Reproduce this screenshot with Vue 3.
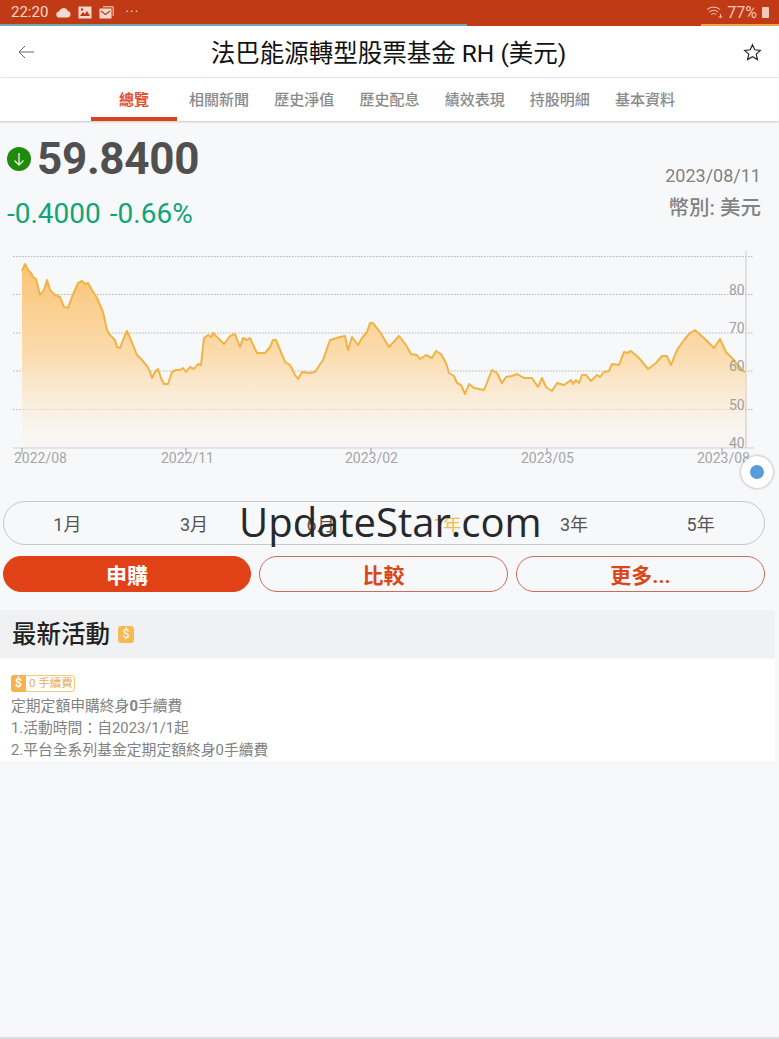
<template>
  <div class="page">
    <div class="statusbar">
      <div class="status-left">
        <span class="time">22:20</span>
        <svg class="st-ic" width="15" height="11" viewBox="0 0 15 11"><path d="M3.5 10.5a3 3 0 0 1-.4-6A4.6 4.6 0 0 1 11.8 4a3.3 3.3 0 0 1 0 6.500z" fill="#f6d9cc"/></svg>
        <svg class="st-ic" width="14" height="13" viewBox="0 0 14 13"><rect x="0.500" y="0.500" width="13" height="12" fill="#f6d9cc"/><path d="M2 10l3-4 2 2 2-3 3 5z" fill="#bf3a15"/><circle cx="4" cy="3.500" r="1.200" fill="#bf3a15"/></svg>
        <svg class="st-ic" width="15" height="13" viewBox="0 0 15 13"><path d="M4 .8h10.200v9" fill="none" stroke="#f6d9cc"/><rect x="0.500" y="2.500" width="12" height="10" fill="#f6d9cc"/><path d="M2 5l4.500 3.500L11 5" fill="none" stroke="#bf3a15" stroke-width="1.200"/></svg>
        <span class="dots">···</span>
      </div>
      <div class="status-right">
        <svg width="18" height="13" viewBox="0 0 18 13" fill="none" stroke="#f2c9b8" stroke-width="1"><path d="M1 3.500a10 10 0 0 1 13 0M3 6a7 7 0 0 1 9 0M5 8.500a4 4 0 0 1 5 0"/><path d="M14.500 8v4M12.800 10.200l1.700 1.800 1.700-1.800" /></svg>
        <span class="batt-pct">77%</span>
        <span class="batt"></span>
      </div>
      <span class="load-teal"></span>
      <span class="load-orange"></span>
    </div>

    <header class="titlebar">
      <svg class="back" width="16" height="14" viewBox="0 0 16 14" fill="none" stroke="#666" stroke-width="1"><path d="M16 7H1M7 1L1 7l6 6"/></svg>
      <h1>法巴能源轉型股票基金 RH (美元)</h1>
      <svg class="star" width="19" height="18" viewBox="0 0 20 19" fill="none" stroke="#222" stroke-width="1.200"><path d="M10 1.800l2.400 5.400 5.900.6-4.400 3.900 1.300 5.800-5.200-3-5.200 3 1.300-5.800L1.700 7.800l5.900-.6z"/></svg>
    </header>

    <nav class="tabs">
      <a v-for="(t, i) in tabs" :key="t" class="tab" :class="{ active: i === 0 }">{{ t }}</a>
    </nav>

    <section class="quote">
      <div>
        <div class="price-row">
          <svg width="24" height="24" viewBox="0 0 24 24"><circle cx="12" cy="12" r="12" fill="#1f8a0c"/><path d="M12 6v12M7.500 13.500L12 18l4.500-4.500" fill="none" stroke="#dff0d8" stroke-width="1.400"/></svg>
          <span class="price">59.8400</span>
        </div>
        <div class="change"><span>-0.4000</span><span>-0.66%</span></div>
      </div>
      <div class="meta">
        <div class="date">2023/08/11</div>
        <div class="currency">幣別: 美元</div>
      </div>
    </section>

    <div class="chart-wrap">
      <svg class="chart" width="779" height="222" viewBox="0 248 779 222">
        <defs>
          <linearGradient id="area" x1="0" y1="264" x2="0" y2="448" gradientUnits="userSpaceOnUse">
            <stop offset="0" stop-color="#fbc475" />
            <stop offset="0.5" stop-color="#fbdcae" />
            <stop offset="1" stop-color="#fbf4ea" stop-opacity="0.300" />
          </linearGradient>
        </defs>
        <line v-for="y in grid" :key="y" x1="13" x2="754" :y1="y" :y2="y" stroke="#b4b4b4" stroke-dasharray="1.500 1.500" />
        <polygon :points="areaPoints" fill="url(#area)" />
        <polyline :points="linePoints" fill="none" stroke="#f2b345" stroke-width="2" stroke-linejoin="round" />
        <line x1="13" x2="754" y1="448" y2="448" stroke="#cfcfcf" stroke-width="1.200" />
        <line x1="746" x2="746" y1="251" y2="448" stroke="#cfcfcf" stroke-width="1.200" />
        <line v-for="t in xTicks" :key="t.label" :x1="t.x" :x2="t.x" y1="448" y2="454" stroke="#999" />
        <text v-for="t in xTicks" :key="t.label + 't'" :x="t.tx" y="463" class="ax">{{ t.label }}</text>
        <text v-for="l in yLabels" :key="l.v" x="729" :y="l.y" class="ax yl">{{ l.v }}</text>
      </svg>
      <button class="fab"><span></span></button>
    </div>

    <div class="range">
      <span v-for="(r, i) in ranges" :key="r" class="range-item" :class="{ on: i === 3 }">{{ r }}</span>
    </div>

    <div class="actions">
      <button class="btn primary">申購</button>
      <button class="btn">比較</button>
      <button class="btn">更多...</button>
    </div>

    <section class="promo">
      <div class="promo-head">
        <h2>最新活動</h2>
        <span class="coin">$</span>
      </div>
      <div class="promo-body">
        <div class="badge"><span class="badge-coin">$</span><span class="badge-text">0 手續費</span></div>
        <p>定期定額申購終身<b>0</b>手續費</p>
        <p>1.活動時間：自2023/1/1起</p>
        <p>2.平台全系列基金定期定額終身0手續費</p>
      </div>
    </section>

    <div class="watermark">UpdateStar.com</div>
    <div class="bottom-line"></div>
  </div>
</template>

<script setup>
const tabs = ['總覽', '相關新聞', '歷史淨值', '歷史配息', '績效表現', '持股明細', '基本資料']
const ranges = ['1月', '3月', '6月', '1年', '3年', '5年']
const grid = [256.5, 294.5, 333, 371, 409.5]
const xTicks = [
  { x: 22, tx: 14, label: '2022/08' },
  { x: 186, tx: 161, label: '2022/11' },
  { x: 371, tx: 345, label: '2023/02' },
  { x: 547, tx: 521, label: '2023/05' },
  { x: 722, tx: 697, label: '2023/08' },
]
const yLabels = [
  { v: 80, y: 295 },
  { v: 70, y: 333 },
  { v: 60, y: 371 },
  { v: 50, y: 410 },
  { v: 40, y: 448 },
]

// rough trace of the price line, page coordinates
const pts = [
  [22, 271], [25, 264], [28, 270], [31, 273], [33, 277], [36, 279], [40, 295], [44, 290], [47, 280], [50, 290],
  [55, 295], [60, 297], [64, 307], [68, 308], [72, 297], [78, 283], [82, 281], [85, 284], [88, 283], [92, 290],
  [97, 298], [103, 312], [107, 330], [110, 335], [115, 340], [117, 347], [120, 348], [123, 340], [127, 331],
  [130, 338], [133, 345], [137, 355], [142, 360], [147, 366], [150, 372], [152, 378], [155, 372], [158, 369],
  [161, 378], [164, 384], [168, 384], [172, 372], [176, 370], [180, 370], [183, 368], [186, 372], [190, 367],
  [194, 369], [198, 364], [201, 365], [204, 338], [208, 335], [211, 337], [213, 333], [218, 338], [224, 344],
  [230, 336], [235, 334], [240, 347], [243, 338], [247, 340], [250, 338], [257, 353], [265, 353], [270, 347],
  [273, 340], [276, 340], [285, 362], [290, 365], [295, 375], [298, 379], [302, 372], [310, 373], [315, 372],
  [323, 360], [330, 340], [340, 337], [345, 336], [348, 350], [352, 337], [358, 345], [362, 338], [367, 332],
  [370, 323], [373, 323], [380, 332], [389, 347], [399, 336], [406, 345], [411, 354], [417, 355], [420, 359],
  [426, 355], [432, 358], [436, 351], [441, 354], [446, 363], [449, 373], [454, 376], [457, 383], [461, 385],
  [465, 394], [469, 384], [474, 388], [484, 390], [492, 370], [497, 373], [502, 383], [506, 377], [512, 376],
  [517, 374], [524, 378], [532, 378], [538, 387], [542, 378], [546, 387], [552, 391], [557, 383], [564, 385],
  [571, 380], [573, 384], [576, 380], [579, 383], [582, 375], [586, 375], [591, 381], [597, 375], [600, 377],
  [604, 372], [609, 371], [612, 364], [619, 365], [624, 352], [627, 353], [631, 351], [639, 358], [648, 369],
  [656, 363], [662, 356], [667, 356], [671, 365], [677, 350], [684, 340], [690, 333], [695, 330], [706, 340],
  [714, 348], [720, 339], [726, 352], [732, 358], [742, 370], [745, 372],
]
const linePoints = pts.map((p) => p.join(',')).join(' ')
const areaPoints = `22,448 ${linePoints} 745,448`
</script>

<style>
body {
  background: #f7f8fa;
}
</style>

<style scoped>
.page {
  position: relative;
  width: 779px;
  height: 1039px;
  overflow: hidden;
  background: #f7f8fa;
  font-family: Roboto, "Noto Sans CJK TC", sans-serif;
}

.statusbar {
  position: relative;
  height: 26px;
  padding: 0 10px 2px 11px;
  box-sizing: border-box;
  background: #bf3a15;
  display: flex;
  justify-content: space-between;
  align-items: center;
  color: #f6d9cc;
}
.status-left, .status-right {
  display: flex;
  align-items: center;
}
.time {
  font-size: 15px;
  margin-right: 8px;
}
.st-ic {
  margin-right: 7px;
}
.dots {
  font-size: 14px;
  margin-left: 4px;
  letter-spacing: 1px;
}
.batt-pct {
  font-size: 16px;
  margin: 0 5px 0 3px;
  color: #f2c9b8;
}
.batt {
  width: 7px;
  height: 11px;
  background: #f2c9b8;
  border-radius: 1px;
}
.load-teal {
  position: absolute;
  left: 0;
  bottom: 0;
  width: 467px;
  height: 2px;
  background: #6fa8ae;
}
.load-orange {
  position: absolute;
  left: 701px;
  right: 0;
  bottom: 0;
  height: 2px;
  background: #f0a24e;
}

.titlebar {
  height: 51px;
  background: #fff;
  border-bottom: 1px solid #e6e6e6;
  display: flex;
  align-items: center;
  justify-content: space-between;
  padding: 0 17px 0 18px;
}
.titlebar h1 {
  margin: 0;
  font-size: 24.500px;
  font-weight: 400;
  color: #111;
  white-space: nowrap;
}

.tabs {
  height: 43px;
  background: #fff;
  display: flex;
  justify-content: center;
  box-shadow: 0 1px 2px rgba(0, 0, 0, 0.2);
}
.tab {
  width: 85.200px;
  box-sizing: border-box;
  text-align: center;
  line-height: 44px;
  font-size: 15px;
  font-weight: 500;
  color: #8a8a8a;
}
.tab.active {
  color: #e0512c;
  font-weight: 700;
  border-bottom: 4px solid #d8431a;
}

.quote {
  display: flex;
  justify-content: space-between;
  padding: 13px 18px 0 7px;
  height: 127px;
  box-sizing: border-box;
}
.price-row {
  display: flex;
  align-items: center;
  gap: 6px;
  height: 50px;
}
.price {
  font-size: 44px;
  line-height: 50px;
  font-weight: 700;
  letter-spacing: -0.3px;
  color: #505050;
}
.change {
  display: flex;
  gap: 9px;
  margin: 14px 0 0;
  font-size: 28px;
  line-height: 32px;
  color: #10a578;
}
.meta {
  text-align: right;
  color: #828282;
  padding-top: 30px;
}
.date {
  font-size: 18px;
  line-height: 24px;
}
.currency {
  font-size: 20.500px;
  line-height: 26px;
  margin-top: 7px;
  font-weight: 500;
}

.chart-wrap {
  position: relative;
  height: 222px;
}
.chart {
  display: block;
}
.ax {
  font-size: 14px;
  fill: #a6a6a6;
}
.yl {
  fill: #a0a0a0;
}
.fab {
  position: absolute;
  left: 741px;
  top: 208px;
  width: 32px;
  height: 32px;
  padding: 0;
  border: none;
  border-radius: 50%;
  background: #fff;
  box-shadow: 0 0 3px rgba(0, 0, 0, 0.4);
  display: flex;
  align-items: center;
  justify-content: center;
}
.fab span {
  width: 14px;
  height: 14px;
  border-radius: 50%;
  background: #5a9bdc;
}

.range {
  margin: 31px 14px 0 3px;
  height: 44px;
  box-sizing: border-box;
  border: 1px solid #c8c8c8;
  border-radius: 22px;
  display: grid;
  grid-template-columns: repeat(6, 1fr);
  align-items: center;
  text-align: center;
  font-size: 18px;
  color: #555;
}
.range-item.on {
  color: #f5b84a;
}

.actions {
  display: grid;
  grid-template-columns: 248px 249px 249px;
  gap: 8px;
  margin: 11px 0 0 3px;
}
.btn {
  height: 36px;
  padding: 0;
  border: 1px solid #cf6a54;
  border-radius: 18px;
  background: transparent;
  color: #dc4516;
  font-family: inherit;
  font-size: 21px;
  font-weight: 700;
}
.btn.primary {
  background: #e04116;
  border-color: #e04116;
  color: #fff;
}

.promo {
  width: 775px;
  margin-top: 18px;
}
.promo-head {
  height: 48px;
  box-sizing: border-box;
  padding: 0 0 0 12px;
  background: #f0f1f2;
  display: flex;
  align-items: center;
  gap: 8px;
}
.promo-head h2 {
  margin: -4px 0 0;
  font-size: 24.500px;
  font-weight: 500;
  color: #222;
}
.coin {
  width: 16px;
  height: 17px;
  border-radius: 3px;
  background: #f7b955;
  color: #fff;
  font-size: 12px;
  line-height: 17px;
  text-align: center;
}
.promo-body {
  margin-top: 1px;
  height: 102px;
  box-sizing: border-box;
  background: #fff;
  padding: 16px 0 0 11px;
}
.badge {
  display: flex;
  width: 64px;
  height: 17px;
  box-sizing: border-box;
  border: 1px solid #f7c873;
  border-radius: 3px;
  margin-bottom: 3px;
}
.badge-coin {
  width: 15px;
  margin: -1px 0 -1px -1px;
  background: #f6b450;
  border-radius: 3px 0 0 3px;
  color: #fff;
  font-size: 12px;
  font-weight: 700;
  line-height: 17px;
  text-align: center;
}
.badge-text {
  margin-left: 3px;
  font-size: 11.500px;
  line-height: 15px;
  white-space: nowrap;
  color: #e7ad55;
}
.promo-body p {
  margin: 0;
  font-size: 14.800px;
  line-height: 22px;
  font-weight: 400;
  color: #828282;
}

.watermark {
  position: absolute;
  left: 239px;
  top: 494px;
  font-family: "Open Sans", sans-serif;
  font-size: 40px;
  line-height: 56px;
  color: #26282b;
  white-space: nowrap;
}
.bottom-line {
  position: absolute;
  left: 0;
  right: 0;
  bottom: 0;
  height: 2px;
  background: #dcdcdc;
}
</style>
